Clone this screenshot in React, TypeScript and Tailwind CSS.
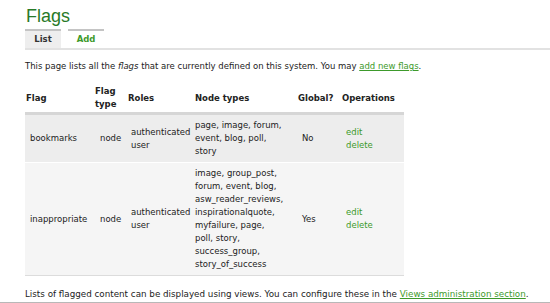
import React from "react";

const rows = [
  {
    flag: "bookmarks",
    type: "node",
    roles: ["authenticated", "user"],
    nodes: ["page, image, forum,", "event, blog, poll,", "story"],
    global: "No",
  },
  {
    flag: "inappropriate",
    type: "node",
    roles: ["authenticated", "user"],
    nodes: [
      "image, group_post,",
      "forum, event, blog,",
      "asw_reader_reviews,",
      "inspirationalquote,",
      "myfailure, page,",
      "poll, story,",
      "success_group,",
      "story_of_success",
    ],
    global: "Yes",
  },
];

export default function App() {
  return (
    <div className="w-[550px] h-[303px] overflow-hidden bg-white font-['DejaVu_Sans',sans-serif] text-[8.5px] leading-[13px] text-[#222]">
      <div className="h-[302px] flex flex-col pl-[25px]">
        {/* title */}
        <h1 className="font-['Liberation_Sans',Arial,sans-serif] text-[18px] leading-[20px] text-[#287a28] pt-[6px] pl-[1px]">
          Flags
        </h1>

        {/* tabs */}
        <div className="mt-[3px] flex gap-[7px] border-b-2 border-[#e2e2e2]">
          <span className="w-[36px] h-[19px] border-t-2 border-[#c4c4c4] bg-[#eeeeee] font-bold text-[#333] flex items-center justify-center">
            List
          </span>
          <span className="w-[36px] h-[19px] border-t-2 border-[#c4c4c4] font-bold text-[#3d9a2b] flex items-center justify-center">
            Add
          </span>
        </div>

        {/* intro */}
        <p className="mt-[10px] whitespace-nowrap">
          This page lists all the <em>flags</em> that are currently defined on this system. You may{" "}
          <a className="text-[#3d9a2b] underline">add new flags</a>.
        </p>

        {/* table */}
        <table className="mt-[12px] w-[379px] table-fixed text-left">
          <thead>
            <tr className="border-b-[3px] border-[#d6d6d6]">
              <th className="w-[70px] pl-[1px] pb-[1px] align-middle font-bold">Flag</th>
              <th className="w-[31px] pb-[1px] align-middle font-bold">
                Flag
                <br />
                type
              </th>
              <th className="w-[64px] pl-[2px] pb-[1px] align-middle font-bold">Roles</th>
              <th className="w-[107px] pl-[5px] pb-[1px] align-middle font-bold">Node types</th>
              <th className="w-[44px] pl-[1px] pb-[1px] align-middle font-bold">Global?</th>
              <th className="w-[63px] pl-[1px] pb-[1px] align-middle font-bold">Operations</th>
            </tr>
          </thead>
          <tbody>
            {rows.map((r, i) => (
              <tr
                key={r.flag}
                className={i === 0 ? "bg-[#ededed] border-b border-white" : "bg-[#f5f5f5] border-b border-[#dcdcdc]"}
              >
                <td className="pl-[5px] py-[4px] align-middle whitespace-nowrap">{r.flag}</td>
                <td className="pl-[5px] py-[4px] align-middle">{r.type}</td>
                <td className="pl-[5px] py-[4px] align-middle whitespace-nowrap">
                  {r.roles[0]}
                  <br />
                  {r.roles[1]}
                </td>
                <td className="pl-[5px] py-[4px] align-middle whitespace-nowrap">
                  {r.nodes.map((n) => (
                    <div key={n}>{n}</div>
                  ))}
                </td>
                <td className="pl-[5px] py-[4px] align-middle">{r.global}</td>
                <td className="pl-[5px] py-[4px] align-middle text-[#3d9a2b]">
                  <div>edit</div>
                  <div>delete</div>
                </td>
              </tr>
            ))}
          </tbody>
        </table>

        {/* footer */}
        <p className="mt-[12px] whitespace-nowrap text-[8.75px]">
          Lists of flagged content can be displayed using views. You can configure these in the{" "}
          <a className="text-[#3d9a2b] underline">Views administration section</a>.
        </p>
      </div>
      <div className="h-px bg-[#b8b8b8]" />
    </div>
  );
}
